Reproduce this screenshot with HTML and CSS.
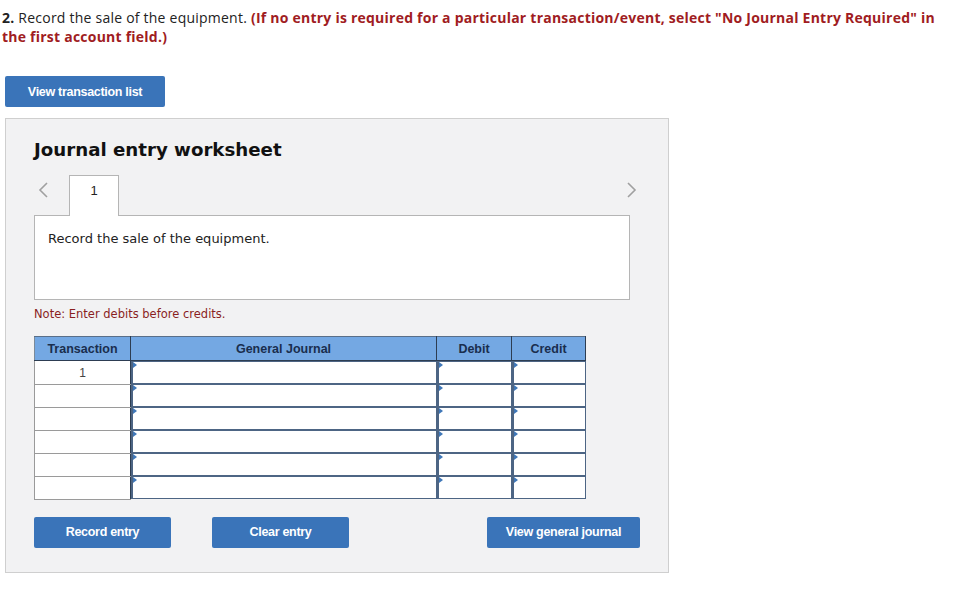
FILE: index.html
```html
<!DOCTYPE html>
<html>
<head>
<meta charset="utf-8">
<link rel="stylesheet" href="styles.css">
</head>
<body>
<p class="prompt"><b>2.</b> Record the sale of the equipment. <span class="hint">(If no entry is required for a particular transaction/event, select "No Journal Entry Required" in the first account field.)</span></p>
<div class="top-btn-row"><button class="btn btn-list">View transaction list</button></div>
<div class="panel">
  <h2 class="title">Journal entry worksheet</h2>
  <div class="tabs">
    <span class="arrow arrow-left"><svg width="12" height="16" viewBox="0 0 12 16"><path d="M10 1 L3 8 L10 15" fill="none" stroke="#a0a0a0" stroke-width="1.6"/></svg></span>
    <span class="tab">1</span>
    <span class="spacer"></span>
    <span class="arrow arrow-right"><svg width="12" height="16" viewBox="0 0 12 16"><path d="M2 1 L9 8 L2 15" fill="none" stroke="#a0a0a0" stroke-width="1.6"/></svg></span>
  </div>
  <div class="desc">Record the sale of the equipment.</div>
  <div class="note">Note: Enter debits before credits.</div>
  <table class="journal">
    <thead>
      <tr><th class="c-tr">Transaction</th><th class="c-gj">General Journal</th><th class="c-db">Debit</th><th class="c-cr">Credit</th></tr>
    </thead>
    <tbody>
      <tr><td class="tr">1</td><td class="in"><div class="box"></div></td><td class="in"><div class="box"></div></td><td class="in"><div class="box"></div></td></tr>
      <tr><td class="tr"></td><td class="in"><div class="box"></div></td><td class="in"><div class="box"></div></td><td class="in"><div class="box"></div></td></tr>
      <tr><td class="tr"></td><td class="in"><div class="box"></div></td><td class="in"><div class="box"></div></td><td class="in"><div class="box"></div></td></tr>
      <tr><td class="tr"></td><td class="in"><div class="box"></div></td><td class="in"><div class="box"></div></td><td class="in"><div class="box"></div></td></tr>
      <tr><td class="tr"></td><td class="in"><div class="box"></div></td><td class="in"><div class="box"></div></td><td class="in"><div class="box"></div></td></tr>
      <tr><td class="tr"></td><td class="in"><div class="box"></div></td><td class="in"><div class="box"></div></td><td class="in"><div class="box"></div></td></tr>
    </tbody>
  </table>
  <div class="actions">
    <button class="btn btn-act">Record entry</button>
    <button class="btn btn-act btn-clear">Clear entry</button>
    <span class="spacer"></span>
    <button class="btn btn-view">View general journal</button>
  </div>
</div>
</body>
</html>
```
FILE: styles.css
```css
html, body { margin: 0; padding: 0; background: #fff; }
body { width: 968px; }
.prompt {
  margin: 0;
  padding: 8px 0 0 2px;
  font-family: "Open Sans", Lato, sans-serif;
  font-size: 14px;
  letter-spacing: 0.23px;
  line-height: 19px;
  color: #222;
  width: 945px;
}
.prompt b { font-weight: 700; }
.hint { color: #a01c22; font-weight: 700; }
.top-btn-row { padding: 30px 0 0 5px; height: 31px; }
.btn {
  border: 0;
  border-radius: 2px;
  background: #3a74b9;
  color: #fff;
  font-family: "Liberation Sans", Arial, sans-serif;
  font-weight: 700;
  font-size: 12.5px;
  letter-spacing: -0.3px;
  height: 31px;
  padding: 0;
  cursor: pointer;
}
.btn-list { width: 160px; }
.panel {
  margin: 11px 0 0 5px;
  width: 662px;
  height: 453px;
  background: #f2f2f3;
  border: 1px solid #cfcfcf;
  box-sizing: content-box;
}
.title {
  margin: 0;
  padding: 19px 0 0 28px;
  font-family: "DejaVu Sans", Verdana, sans-serif;
  font-weight: 700;
  font-size: 18.2px;
  line-height: 24px;
  color: #111;
}
.tabs {
  display: flex;
  align-items: flex-start;
  margin: 13px 0 0 28px;
  width: 596px;
  height: 40px;
}
.arrow { display: block; margin-top: 7px; }
.arrow-left { margin-left: 3px; width: 32px; }
.arrow-right { margin-right: -8px; }
.spacer { flex: 1; }
.tab {
  width: 50px;
  height: 41px;
  background: #fff;
  border: 1px solid #b5b5b5;
  border-bottom: 0;
  box-sizing: border-box;
  text-align: center;
  font-family: "Liberation Sans", Arial, sans-serif;
  font-size: 13px;
  line-height: 30px;
  color: #222;
  position: relative;
  z-index: 1;
  margin-bottom: -1px;
}
.desc {
  margin: 0 0 0 28px;
  width: 596px;
  height: 85px;
  background: #fff;
  border: 1px solid #b5b5b5;
  box-sizing: border-box;
  padding: 14px 0 0 13px;
  font-family: "DejaVu Sans", Verdana, sans-serif;
  font-size: 13px;
  line-height: 18px;
  color: #222;
}
.note {
  margin: 6px 0 0 28px;
  font-family: "DejaVu Sans", Verdana, sans-serif;
  font-size: 11.5px;
  line-height: 16px;
  color: #8a1f1f;
}
.journal {
  margin: 14px 0 0 28px;
  border-collapse: collapse;
  width: 547px;
  table-layout: fixed;
  font-family: "Liberation Sans", Arial, sans-serif;
}
.journal th {
  background: #74a8e3;
  color: #1a2e4e;
  font-size: 12.5px;
  font-weight: 700;
  height: 23px;
  padding: 0;
  border: 1px solid #2d3d52;
  border-top-color: #5a6f88;
  border-left-color: #7a8a9a;
  text-align: center;
}
.c-tr { width: 95px; }
.c-gj { width: 305px; }
.c-db { width: 74px; }
.c-cr { width: 73px; }
.journal td { padding: 0; height: 22px; }
.journal td.tr {
  background: #fff;
  border: 1px solid #9a9a9a;
  border-right: 1px solid #2d3d52;
  text-align: center;
  vertical-align: top;
  font-size: 12px;
  height: 19px;
  padding-top: 3px;
  line-height: 18px;
  color: #444;
}
.journal td.in { border: 0; vertical-align: top; }
.box {
  height: 23px;
  box-sizing: border-box;
  background: #fff;
  border: 1px solid #4d6584;
  border-width: 1px 1px 1px 2px;
  position: relative;
}
.box::before {
  content: "";
  position: absolute;
  left: 0;
  top: 0;
  border-left: 4px solid #3f77b8;
  border-top: 3px solid transparent;
  border-bottom: 3px solid transparent;
}
.actions {
  display: flex;
  margin: 17px 0 0 28px;
  width: 606px;
}
.btn-act { width: 137px; }
.btn-clear { margin-left: 41px; }
.btn-view { width: 153px; }
```
